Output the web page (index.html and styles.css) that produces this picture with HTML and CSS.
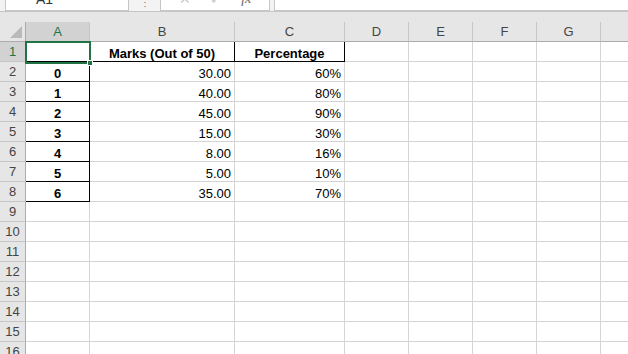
FILE: index.html
```html
<!DOCTYPE html>
<html>
<head>
<meta charset="utf-8">
<link rel="stylesheet" href="styles.css">
</head>
<body>
<div class="topbar">
  <div class="namebox"><span class="nb-text">A1</span></div>
  <div class="dots">⋮</div>
  <div class="fxbox">
    <span class="ico">✕</span><span class="ico">✓</span><span class="ico fx">fx</span>
  </div>
  <div class="formula"></div>
</div>
<div class="strip"></div>
<div class="sheet">
  <div class="corner"><svg width="12" height="12" viewBox="0 0 12 12"><polygon points="12,0 12,12 0,12" fill="#b9b9b9"/></svg></div>
  <div class="ch sel">A</div>
  <div class="ch">B</div>
  <div class="ch">C</div>
  <div class="ch">D</div>
  <div class="ch">E</div>
  <div class="ch">F</div>
  <div class="ch">G</div>
  <div class="ch last"></div>

  <div class="rh sel">1</div>
  <div class="c a"></div>
  <div class="c hd b1">Marks (Out of 50)</div>
  <div class="c hd c1">Percentage</div>
  <div class="c"></div><div class="c"></div><div class="c"></div><div class="c"></div><div class="c last"></div>

  <div class="rh">2</div>
  <div class="c a">0</div><div class="c r">30.00</div><div class="c r">60%</div>
  <div class="c"></div><div class="c"></div><div class="c"></div><div class="c"></div><div class="c last"></div>

  <div class="rh">3</div>
  <div class="c a">1</div><div class="c r">40.00</div><div class="c r">80%</div>
  <div class="c"></div><div class="c"></div><div class="c"></div><div class="c"></div><div class="c last"></div>

  <div class="rh">4</div>
  <div class="c a">2</div><div class="c r">45.00</div><div class="c r">90%</div>
  <div class="c"></div><div class="c"></div><div class="c"></div><div class="c"></div><div class="c last"></div>

  <div class="rh">5</div>
  <div class="c a">3</div><div class="c r">15.00</div><div class="c r">30%</div>
  <div class="c"></div><div class="c"></div><div class="c"></div><div class="c"></div><div class="c last"></div>

  <div class="rh">6</div>
  <div class="c a">4</div><div class="c r">8.00</div><div class="c r">16%</div>
  <div class="c"></div><div class="c"></div><div class="c"></div><div class="c"></div><div class="c last"></div>

  <div class="rh">7</div>
  <div class="c a">5</div><div class="c r">5.00</div><div class="c r">10%</div>
  <div class="c"></div><div class="c"></div><div class="c"></div><div class="c"></div><div class="c last"></div>

  <div class="rh">8</div>
  <div class="c a">6</div><div class="c r">35.00</div><div class="c r">70%</div>
  <div class="c"></div><div class="c"></div><div class="c"></div><div class="c"></div><div class="c last"></div>

  <div class="rh">9</div>
  <div class="c"></div><div class="c"></div><div class="c"></div><div class="c"></div><div class="c"></div><div class="c"></div><div class="c"></div><div class="c last"></div>
  <div class="rh">10</div>
  <div class="c"></div><div class="c"></div><div class="c"></div><div class="c"></div><div class="c"></div><div class="c"></div><div class="c"></div><div class="c last"></div>
  <div class="rh">11</div>
  <div class="c"></div><div class="c"></div><div class="c"></div><div class="c"></div><div class="c"></div><div class="c"></div><div class="c"></div><div class="c last"></div>
  <div class="rh">12</div>
  <div class="c"></div><div class="c"></div><div class="c"></div><div class="c"></div><div class="c"></div><div class="c"></div><div class="c"></div><div class="c last"></div>
  <div class="rh">13</div>
  <div class="c"></div><div class="c"></div><div class="c"></div><div class="c"></div><div class="c"></div><div class="c"></div><div class="c"></div><div class="c last"></div>
  <div class="rh">14</div>
  <div class="c"></div><div class="c"></div><div class="c"></div><div class="c"></div><div class="c"></div><div class="c"></div><div class="c"></div><div class="c last"></div>
  <div class="rh">15</div>
  <div class="c"></div><div class="c"></div><div class="c"></div><div class="c"></div><div class="c"></div><div class="c"></div><div class="c"></div><div class="c last"></div>
  <div class="rh">16</div>
  <div class="c"></div><div class="c"></div><div class="c"></div><div class="c"></div><div class="c"></div><div class="c"></div><div class="c"></div><div class="c last"></div>

  <div class="selection"><div class="handle"></div></div>
</div>
</body>
</html>
```
FILE: styles.css
```css
* { box-sizing: border-box; }
html, body {
  margin: 0;
  padding: 0;
  width: 628px;
  height: 354px;
  overflow: hidden;
  background: #fff;
  font-family: "Liberation Sans", Arial, sans-serif;
}
.topbar {
  height: 12px;
  display: flex;
  background: #f3f3f3;
  border-bottom: 1px solid #c6c6c6;
  padding-left: 5px;
  overflow: hidden;
}
.namebox {
  width: 124px;
  height: 11px;
  background: #fff;
  border: 1px solid #c6c6c6;
  border-top: none;
  position: relative;
  overflow: hidden;
}
.nb-text {
  position: absolute;
  left: 30px;
  top: -9px;
  font-size: 14px;
  color: #333;
}
.dots {
  width: 31px;
  font-size: 10px;
  color: #777;
  text-align: center;
  line-height: 6px;
  overflow: hidden;
}
.fxbox {
  width: 110px;
  height: 11px;
  background: #fff;
  border: 1px solid #c6c6c6;
  border-top: none;
  display: flex;
  justify-content: space-around;
  align-items: flex-start;
  overflow: hidden;
  padding: 0 8px;
}
.ico {
  font-size: 14px;
  color: #c8c8c8;
  line-height: 14px;
  margin-top: -8px;
}
.ico.fx {
  font-family: "Liberation Serif", serif;
  font-style: italic;
  color: #666;
}
.formula {
  flex: 1;
  height: 11px;
  margin-left: 4px;
  background: #fff;
  border: 1px solid #c6c6c6;
  border-top: none;
  border-right: none;
}
.strip {
  height: 10px;
  background: #e6e6e6;
}
.sheet {
  position: relative;
  display: grid;
  grid-template-columns: 26px 64px 145px 110px 64px 64px 64px 64px 1fr;
  grid-auto-rows: 20px;
  font-size: 13px;
  color: #000;
}
.corner {
  background: #e6e6e6;
  border-right: 1px solid #ababab;
  border-bottom: 1px solid #ababab;
  display: flex;
  align-items: flex-end;
  justify-content: flex-end;
  padding: 0 3px 3px 0;
}
.ch {
  background: #e6e6e6;
  border-right: 1px solid #c6c6c6;
  border-bottom: 1px solid #ababab;
  text-align: center;
  color: #444;
  line-height: 19px;
  font-size: 13px;
}
.ch.last { border-right: none; }
.ch.sel {
  background: #d2d2d2;
  color: #217346;
}
.rh {
  background: #e6e6e6;
  border-right: 1px solid #ababab;
  border-bottom: 1px solid #c6c6c6;
  text-align: center;
  color: #444;
  line-height: 20px;
  font-size: 13px;
}
.rh.sel {
  background: #d2d2d2;
  color: #217346;
}
.c {
  border-right: 1px solid #d4d4d4;
  border-bottom: 1px solid #d4d4d4;
  display: flex;
  align-items: flex-end;
  padding: 0 3px;
  white-space: nowrap;
  overflow: hidden;
  line-height: 15px;
}
.c.last { border-right: none; }
.c.a {
  border-right: 1px solid #000;
  border-bottom: 1px solid #000;
  justify-content: center;
  font-weight: bold;
}
.c.r { justify-content: flex-end; }
.c.hd {
  justify-content: center;
  font-weight: bold;
  border-bottom: 1px solid #000;
  border-right: 1px solid #000;
}
.selection {
  position: absolute;
  left: 25px;
  top: 19px;
  width: 66px;
  height: 23px;
  border: 2px solid #217346;
  pointer-events: none;
}
.handle {
  position: absolute;
  right: -4px;
  bottom: -4px;
  width: 6px;
  height: 6px;
  background: #217346;
  border: 1px solid #fff;
}
```
